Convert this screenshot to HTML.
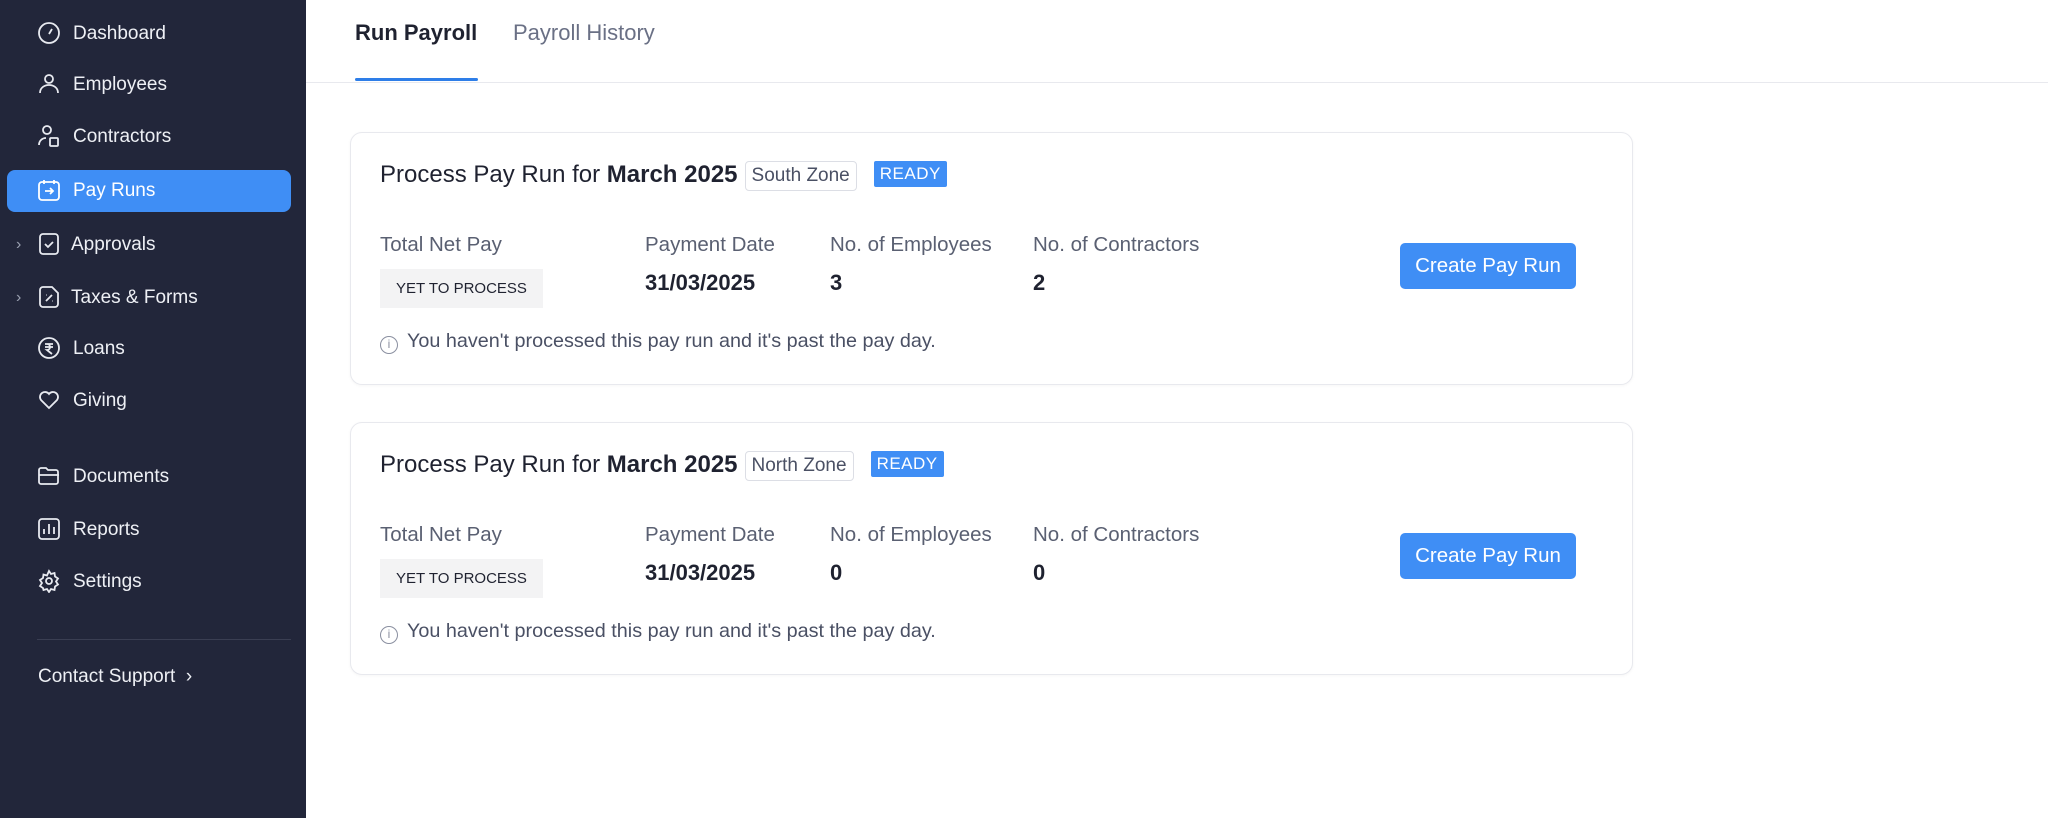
<!DOCTYPE html>
<html><head><meta charset="utf-8"><style>
*{box-sizing:border-box;margin:0;padding:0}
body{width:2048px;height:818px;background:#fff;font-family:"Liberation Sans",sans-serif;position:relative;overflow:hidden}
.sb{position:absolute;left:0;top:0;width:306px;height:818px;background:#22263a}
.it{position:absolute;left:0;width:306px;height:30px;color:#eef0f5;font-size:19px;line-height:30px}
.it svg{position:absolute;left:37px;top:2px}
.it span{position:absolute;left:73px}
.act{position:absolute;left:7px;top:170px;width:284px;height:42px;background:#3f8ef5;border-radius:8px}
.chev{position:absolute;left:16px;color:#9aa0b0;font-size:16px}
.main{position:absolute;left:306px;top:0;right:0;bottom:0}
.tab{position:absolute;top:20px;font-size:22px}
.card{position:absolute;left:350px;width:1283px;height:253px;border:1px solid #e8e9ee;border-radius:12px;background:#fff;box-shadow:0 1px 3px rgba(0,0,0,.04)}
.card .t{position:absolute;left:29px;top:28px;font-size:24px;color:#1f2230;white-space:nowrap}
.zone{display:inline-block;border:1px solid #dcdee5;border-radius:4px;font-size:19px;color:#4a5064;padding:3px 6px;margin-left:7px;vertical-align:1px}
.ready{display:inline-block;background:#3f8ef5;color:#fff;font-size:17px;padding:3px 6px;border-radius:2px;margin-left:17px;vertical-align:3px;letter-spacing:.5px}
.lb{position:absolute;top:100px;font-size:20.5px;color:#5a6072}
.v{position:absolute;top:137px;font-size:22px;color:#1f2230;font-weight:bold}
.ytp{position:absolute;left:29px;top:136px;width:163px;height:39px;background:#f3f3f4;font-size:15px;color:#1f2230;line-height:39px;text-align:center}
.info{position:absolute;left:29px;top:197px;font-size:19.8px;color:#4a5064}
.info i{display:inline-block;width:18px;height:18px;border:1.5px solid #8a8fa0;border-radius:50%;font-size:12px;font-style:normal;text-align:center;line-height:15px;color:#8a8fa0;margin-right:9px;vertical-align:-1px}
.btn{position:absolute;left:1049px;top:110px;width:176px;height:46px;background:#3f8ef5;color:#fff;font-size:20.5px;border-radius:5px;text-align:center;line-height:46px}
</style></head><body>
<div class="sb">
<div class="act"></div>
<div class="it" style="top:19px"><svg width="24" height="24" viewBox="0 0 24 24" fill="none" stroke="#e8eaf0" stroke-width="1.8"><circle cx="12" cy="12" r="10"/><path d="M12 13l3-5"/></svg><span>Dashboard</span></div>
<div class="it" style="top:70px"><svg width="24" height="24" viewBox="0 0 24 24" fill="none" stroke="#e8eaf0" stroke-width="1.8"><circle cx="12" cy="7" r="4"/><path d="M3 21c0-5 4-8 9-8s9 3 9 8"/></svg><span>Employees</span></div>
<div class="it" style="top:122px"><svg width="24" height="24" viewBox="0 0 24 24" fill="none" stroke="#e8eaf0" stroke-width="1.8"><circle cx="10" cy="6" r="4"/><path d="M2 21c0-4 3-7 7-7"/><rect x="13" y="14" width="8" height="8" rx="1"/></svg><span>Contractors</span></div>
<div class="it" style="top:176px;color:#fff"><svg width="24" height="24" viewBox="0 0 24 24" fill="none" stroke="#fff" stroke-width="1.8"><rect x="2" y="4" width="20" height="18" rx="3"/><path d="M7 2v4M17 2v4M8 13h8M13 10l3 3-3 3"/></svg><span>Pay Runs</span></div>
<div class="it" style="top:230px"><span class="chev" style="left:16px">›</span><svg width="24" height="24" viewBox="0 0 24 24" fill="none" stroke="#e8eaf0" stroke-width="1.8"><rect x="3" y="2" width="18" height="20" rx="3"/><path d="M8 12l3 3 5-5"/></svg><span style="left:71px">Approvals</span></div>
<div class="it" style="top:283px"><span class="chev" style="left:16px">›</span><svg width="24" height="24" viewBox="0 0 24 24" fill="none" stroke="#e8eaf0" stroke-width="1.8"><path d="M3 5a3 3 0 013-3h9l6 6v11a3 3 0 01-3 3H6a3 3 0 01-3-3z"/><path d="M9 16l6-6M9 10h.5M15 16h.5"/></svg><span style="left:71px">Taxes &amp; Forms</span></div>
<div class="it" style="top:334px"><svg width="24" height="24" viewBox="0 0 24 24" fill="none" stroke="#e8eaf0" stroke-width="1.8"><circle cx="12" cy="12" r="10"/><path d="M8 8h8M8 11h8M10 8c4 0 4 6 0 6l5 4"/></svg><span>Loans</span></div>
<div class="it" style="top:386px"><svg width="24" height="24" viewBox="0 0 24 24" fill="none" stroke="#e8eaf0" stroke-width="1.8"><path d="M12 20l-8-8a5 5 0 018-6 5 5 0 018 6z"/></svg><span>Giving</span></div>
<div class="it" style="top:462px"><svg width="24" height="24" viewBox="0 0 24 24" fill="none" stroke="#e8eaf0" stroke-width="1.8"><path d="M2 6a2 2 0 012-2h5l2 2h8a2 2 0 012 2v10a2 2 0 01-2 2H4a2 2 0 01-2-2z"/><path d="M2 11h20"/></svg><span>Documents</span></div>
<div class="it" style="top:515px"><svg width="24" height="24" viewBox="0 0 24 24" fill="none" stroke="#e8eaf0" stroke-width="1.8"><rect x="2" y="2" width="20" height="20" rx="3"/><path d="M7 17v-5M12 17V7M17 17v-7"/></svg><span>Reports</span></div>
<div class="it" style="top:567px"><svg width="24" height="24" viewBox="0 0 24 24" fill="none" stroke="#e8eaf0" stroke-width="1.8"><circle cx="12" cy="12" r="3"/><path d="M12 2l2 3 3.5-1 .5 3.5 3 2-2 3 2 3-3 2-.5 3.5-3.5-1-2 3-2-3-3.5 1L6 19l-3-2 2-3-2-3 3-2 .5-3.5 3.5 1z"/></svg><span>Settings</span></div>
<div style="position:absolute;left:37px;top:639px;width:254px;height:1px;background:#3a3e52"></div>
<div class="it" style="top:662px"><span style="left:38px">Contact Support &nbsp;›</span></div>
</div>
<div class="main">
<div class="tab" style="left:49px;font-weight:bold;color:#1f2230">Run Payroll</div>
<div style="position:absolute;left:49px;top:78px;width:123px;height:3px;background:#2e7ee8;border-radius:2px"></div>
<div class="tab" style="left:207px;color:#6a7085">Payroll History</div>
<div style="position:absolute;left:0;right:0;top:82px;height:1px;background:#e8e9ee"></div>
</div>
<div class="card" style="top:132px">
<div class="t">Process Pay Run for <b>March 2025</b><span class="zone">South Zone</span><span class="ready">READY</span></div>
<div class="lb" style="left:29px">Total Net Pay</div><div class="lb" style="left:294px">Payment Date</div><div class="lb" style="left:479px">No. of Employees</div><div class="lb" style="left:682px">No. of Contractors</div>
<div class="ytp">YET TO PROCESS</div>
<div class="v" style="left:294px">31/03/2025</div><div class="v" style="left:479px">3</div><div class="v" style="left:682px">2</div>
<div class="info"><i>i</i>You haven't processed this pay run and it's past the pay day.</div>
<div class="btn">Create Pay Run</div>
</div>
<div class="card" style="top:422px">
<div class="t">Process Pay Run for <b>March 2025</b><span class="zone">North Zone</span><span class="ready">READY</span></div>
<div class="lb" style="left:29px">Total Net Pay</div><div class="lb" style="left:294px">Payment Date</div><div class="lb" style="left:479px">No. of Employees</div><div class="lb" style="left:682px">No. of Contractors</div>
<div class="ytp">YET TO PROCESS</div>
<div class="v" style="left:294px">31/03/2025</div><div class="v" style="left:479px">0</div><div class="v" style="left:682px">0</div>
<div class="info"><i>i</i>You haven't processed this pay run and it's past the pay day.</div>
<div class="btn">Create Pay Run</div>
</div>
</body></html>
